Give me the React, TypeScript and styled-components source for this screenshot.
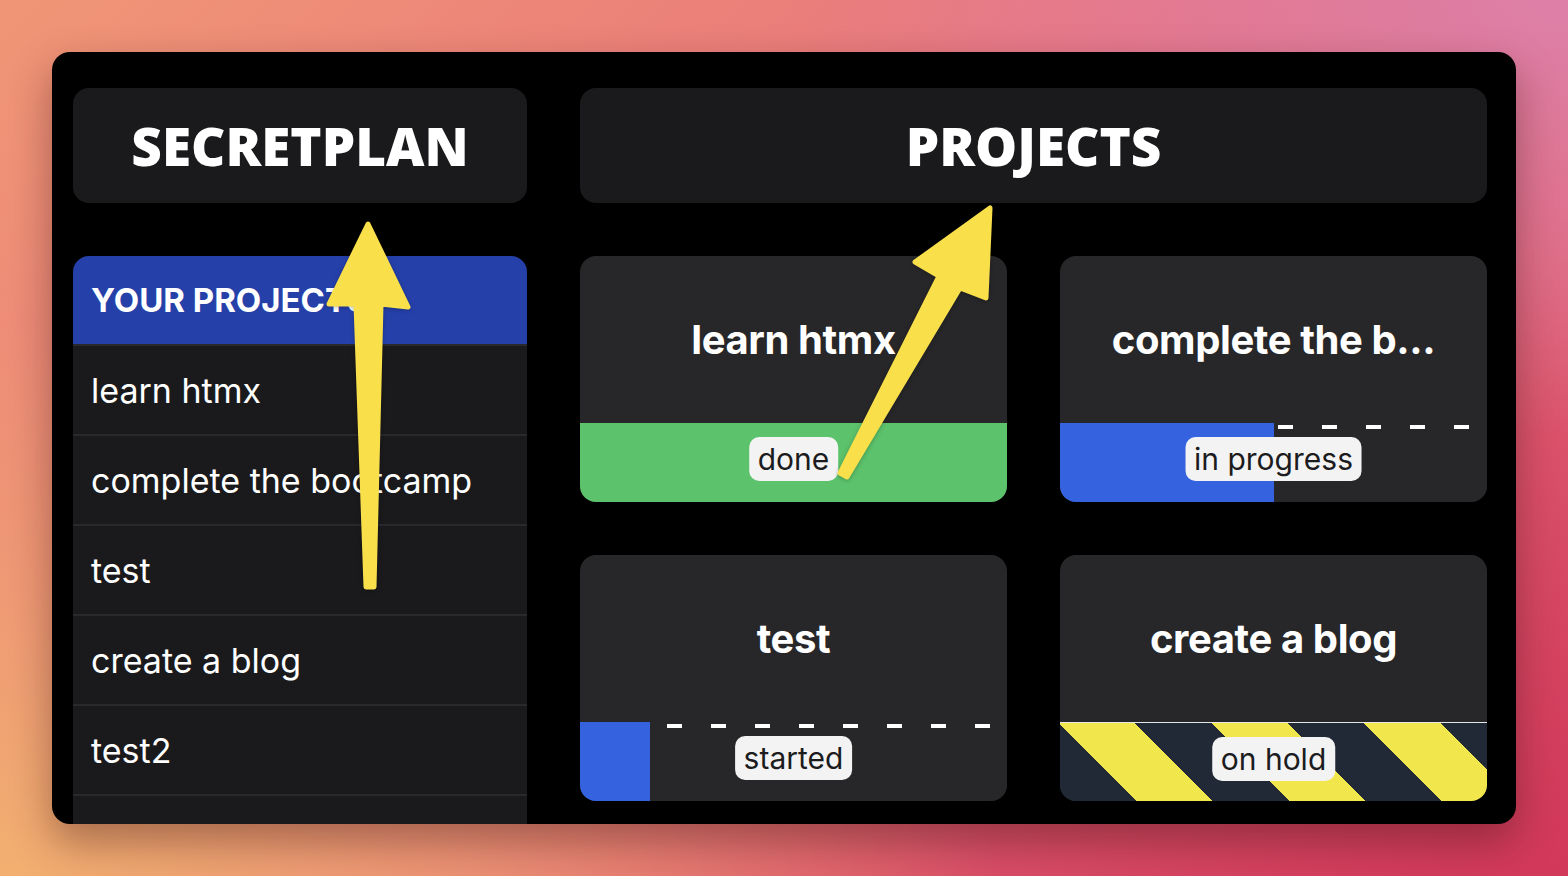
import React from 'react';
import styled, { createGlobalStyle } from 'styled-components';

type Status = 'done' | 'in progress' | 'started' | 'on hold';

interface IProject {
  name: string;
  status: Status;
  progress: number;
  dashOffset: number;
}

const projects: IProject[] = [
  { name: 'learn htmx', status: 'done', progress: 100, dashOffset: 0 },
  { name: 'complete the bootcamp', status: 'in progress', progress: 50, dashOffset: 4 },
  { name: 'test', status: 'started', progress: 16.5, dashOffset: 17 },
  { name: 'create a blog', status: 'on hold', progress: 0, dashOffset: 0 },
];

// last entry is an empty row that runs off the bottom of the window
const sidebarItems = ['learn htmx', 'complete the bootcamp', 'test', 'create a blog', 'test2', ''];

const truncate = (s: string) => (s.length > 14 ? s.slice(0, 14) + '...' : s);

function App() {
  return (
    <>
      <GlobalStyle />
      <Window>
        <Column width="454px">
          <Header>SECRETPLAN</Header>
          <SideList>
            <SideHead>YOUR PROJECTS</SideHead>
            {sidebarItems.map((item, i) => (
              <SideItem key={i}>{item}</SideItem>
            ))}
          </SideList>
        </Column>
        <Column width="907px">
          <Header>PROJECTS</Header>
          <CardGrid>
            {projects.map((p) => (
              <Card key={p.name}>
                <CardTitle>{truncate(p.name)}</CardTitle>
                <StatusStrip status={p.status}>
                  {p.status === 'in progress' || p.status === 'started' ? (
                    <>
                      <Fill style={{ width: `${p.progress}%` }} />
                      <Rest offset={p.dashOffset} />
                    </>
                  ) : null}
                  <Badge>{p.status}</Badge>
                </StatusStrip>
              </Card>
            ))}
          </CardGrid>
        </Column>
      </Window>
      <Arrows viewBox="0 0 1568 876" width="1568" height="876">
        <polygon
          points="329,304 368,224 408,307 381,304 374,587 366,587 356,304"
          fill="#f9e04b"
          stroke="#f9e04b"
          strokeWidth="5"
          strokeLinejoin="round"
        />
        <polygon
          points="990,208 986,298 960,288 847,477 840,473 939,276 915,262"
          fill="#f9e04b"
          stroke="#f9e04b"
          strokeWidth="5"
          strokeLinejoin="round"
        />
      </Arrows>
    </>
  );
}

const GlobalStyle = createGlobalStyle`
  html, body {
    margin: 0;
    padding: 0;
    height: 876px;
    overflow: hidden;
  }
  body {
    font-family: Inter, "Noto Sans", sans-serif;
    background:
      radial-gradient(ellipse at 0% 100%, #f2b070 0%, rgba(242, 176, 112, 0) 45%),
      radial-gradient(ellipse at 100% 0%, #dd80a8 0%, rgba(221, 128, 168, 0) 35%),
      radial-gradient(ellipse at 100% 100%, #d2385a 0%, rgba(210, 56, 90, 0) 50%),
      linear-gradient(135deg, #f09676 0%, #e8727c 50%, #d8506a 100%);
  }
`;

const Window = styled.div`
  margin: 52px 0 0 52px;
  width: 1464px;
  height: 772px;
  box-sizing: border-box;
  padding: 36px 29px 0 21px;
  background: #000;
  border-radius: 18px;
  overflow: hidden;
  display: flex;
  gap: 53px;
  box-shadow: 0 18px 40px rgba(60, 20, 20, 0.4);
`;

const Column = styled.div<{ width: string }>`
  width: ${(props) => props.width};
  flex-shrink: 0;
  display: flex;
  flex-direction: column;
  gap: 53px;
`;

const Header = styled.div`
  height: 115px;
  flex-shrink: 0;
  background: #1a1a1c;
  border-radius: 16px;
  display: flex;
  align-items: center;
  justify-content: center;
  color: #fff;
  font-family: 'Open Sans', 'Noto Sans', sans-serif;
  font-weight: 800;
  font-size: 53px;
`;

const SideList = styled.div`
  border-radius: 16px 16px 0 0;
  overflow: hidden;
  background: #1a1a1c;
`;

const SideHead = styled.div`
  height: 88px;
  background: #2540a9;
  display: flex;
  align-items: center;
  padding-left: 18px;
  color: #fff;
  font-weight: 700;
  font-size: 33px;
`;

const SideItem = styled.div`
  height: 88px;
  border-top: 2px solid #29292c;
  display: flex;
  align-items: center;
  padding-left: 18px;
  color: #fff;
  font-size: 34px;
`;

const CardGrid = styled.div`
  display: grid;
  grid-template-columns: 1fr 1fr;
  column-gap: 53px;
  row-gap: 53px;
`;

const Card = styled.div`
  height: 246px;
  background: #272729;
  border-radius: 16px;
  overflow: hidden;
  display: flex;
  flex-direction: column;
`;

const CardTitle = styled.div`
  flex: 1;
  display: flex;
  align-items: center;
  justify-content: center;
  color: #fff;
  font-weight: 700;
  font-size: 40px;
  letter-spacing: -0.4px;
`;

const stripBg = (status: Status) => {
  if (status === 'done') return 'background: #5cc26b;';
  if (status === 'on hold')
    return `
      border-top: 1px solid #e6e6e6;
      background: repeating-linear-gradient(45deg, #212836 0 54px, #f2e64d 54px 108px);
    `;
  return 'background: #272729;';
};

const StatusStrip = styled.div<{ status: Status }>`
  position: relative;
  height: 79px;
  box-sizing: border-box;
  display: flex;
  ${(props) => stripBg(props.status)}
`;

const Fill = styled.div`
  height: 100%;
  background: #3563e0;
`;

const Rest = styled.div<{ offset: number }>`
  flex: 1;
  height: 100%;
  background-image: repeating-linear-gradient(to right, #fff 0 15px, transparent 15px 44px);
  background-size: 100% 4px;
  background-repeat: no-repeat;
  background-position: ${(props) => props.offset}px 2px;
`;

const Badge = styled.span`
  position: absolute;
  left: 50%;
  top: 14px;
  transform: translateX(-50%);
  height: 44px;
  padding: 0 9px;
  box-sizing: border-box;
  display: flex;
  align-items: center;
  background: #f3f3f3;
  border-radius: 10px;
  color: #1c1c1e;
  font-size: 30px;
  white-space: nowrap;
`;

const Arrows = styled.svg`
  position: absolute;
  left: 0;
  top: 0;
  pointer-events: none;
  filter: drop-shadow(0 1px 2px rgba(0, 0, 0, 0.25));
`;

export default App;
